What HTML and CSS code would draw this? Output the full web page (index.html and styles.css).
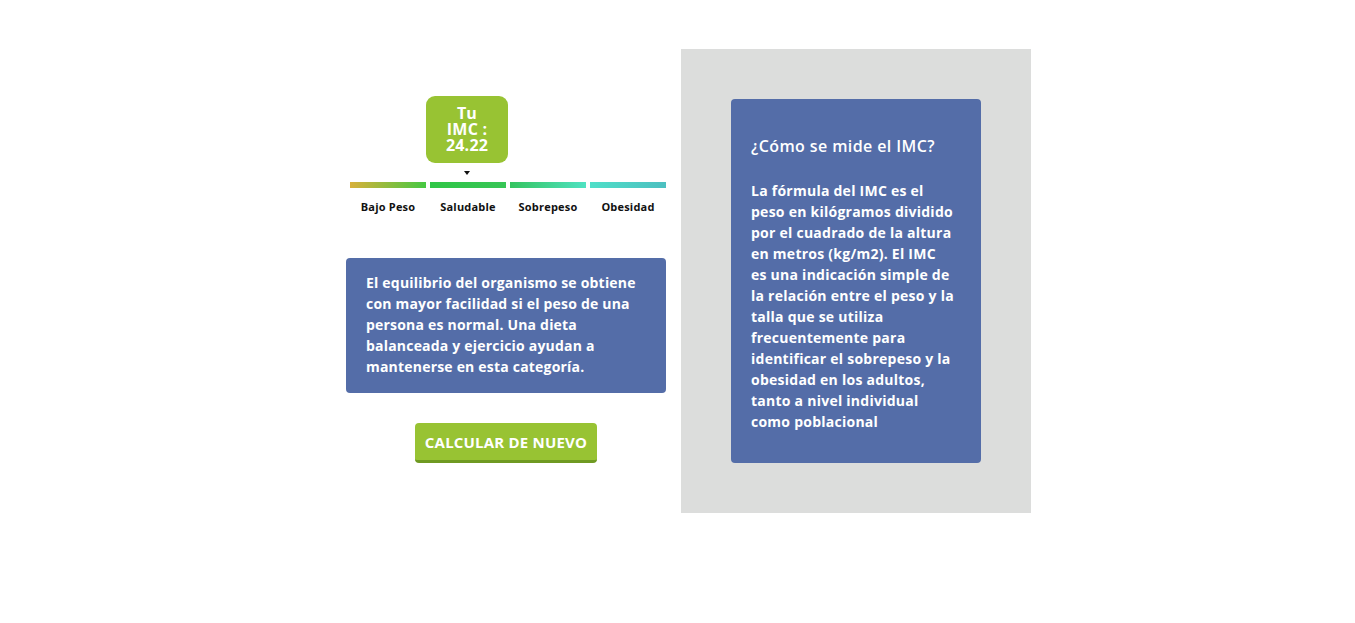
FILE: index.html
```html
<!DOCTYPE html>
<html lang="es">
<head>
<meta charset="utf-8">
<title>IMC</title>
<link rel="stylesheet" href="styles.css">
</head>
<body>
<main class="wrapper">
  <section class="result">
    <div class="bubble-wrap" style="margin-left: 80px;">
      <div class="bubble">Tu<br>IMC :<br>24.22</div>
      <div class="pointer"></div>
    </div>
    <div class="scale">
      <div class="seg">
        <div class="bar bar-bajo"></div>
        <span class="label">Bajo Peso</span>
      </div>
      <div class="seg">
        <div class="bar bar-salud"></div>
        <span class="label">Saludable</span>
      </div>
      <div class="seg">
        <div class="bar bar-sobre"></div>
        <span class="label">Sobrepeso</span>
      </div>
      <div class="seg">
        <div class="bar bar-obes"></div>
        <span class="label">Obesidad</span>
      </div>
    </div>
    <div class="message">El equilibrio del organismo se obtiene<br>con mayor facilidad si el peso de una<br>persona es normal. Una dieta<br>balanceada y ejercicio ayudan a<br>mantenerse en esta categoría.</div>
    <button class="again">CALCULAR DE NUEVO</button>
  </section>
  <aside class="info">
    <div class="info-card">
      <h2 class="info-title">¿Cómo se mide el IMC?</h2>
      <p class="info-text">La fórmula del IMC es el<br>peso en kilógramos dividido<br>por el cuadrado de la altura<br>en metros (kg/m2). El IMC<br>es una indicación simple de<br>la relación entre el peso y la<br>talla que se utiliza<br>frecuentemente para<br>identificar el sobrepeso y la<br>obesidad en los adultos,<br>tanto a nivel individual<br>como poblacional</p>
    </div>
  </aside>
</main>
</body>
</html>
```
FILE: styles.css
```css
* { box-sizing: border-box; }
html, body { margin: 0; padding: 0; background: #ffffff; }
body {
  font-family: "Open Sans", "DejaVu Sans", sans-serif;
  color: #111;
}
.wrapper {
  display: flex;
  width: 700px;
  margin: 49px 0 0 331px;
}
.result {
  width: 350px;
  padding: 47px 15px 0;
  display: flex;
  flex-direction: column;
}
.bubble-wrap {
  display: flex;
  flex-direction: column;
  align-items: center;
  align-self: flex-start;
}
.bubble {
  width: 82px;
  height: 67px;
  background: #98c333;
  border-radius: 9px;
  color: #fff;
  font-weight: 700;
  font-size: 16px;
  line-height: 16px;
  letter-spacing: 0.2px;
  text-align: center;
  padding-top: 9px;
}
.pointer {
  margin-top: 8px;
  width: 0;
  height: 0;
  border-left: 3px solid transparent;
  border-right: 3px solid transparent;
  border-top: 4px solid #111;
}
.scale {
  display: flex;
  width: 320px;
  margin-top: 7px;
}
.seg {
  width: 80px;
  padding-left: 4px;
  display: flex;
  flex-direction: column;
  align-items: center;
}
.bar {
  width: 76px;
  height: 6px;
}
.bar-bajo { background: linear-gradient(90deg, #d8b03a, #45c842); }
.bar-salud { background: linear-gradient(90deg, #2fc646, #37c556); }
.bar-sobre { background: linear-gradient(90deg, #34c45f, #4fe2c2); }
.bar-obes { background: linear-gradient(90deg, #4fdfc8, #4cbfc0); }
.label {
  margin-top: 11px;
  font-size: 11px;
  font-weight: 700;
  letter-spacing: 0.2px;
  color: #111;
  white-space: nowrap;
}
.message {
  margin-top: 44px;
  width: 320px;
  background: #546da8;
  border-radius: 4px;
  color: #fff;
  font-size: 14px;
  font-weight: 700;
  line-height: 21px;
  letter-spacing: 0.2px;
  padding: 14px 20px 16px;
  white-space: nowrap;
}
.again {
  align-self: center;
  margin-top: 30px;
  width: 182px;
  height: 40px;
  border: 0;
  border-bottom: 3px solid #6f9a22;
  border-radius: 4px;
  background: #98c333;
  color: #fff;
  font-family: inherit;
  font-size: 15px;
  font-weight: 700;
  letter-spacing: 0.2px;
  padding: 0;
  cursor: pointer;
}
.info {
  width: 350px;
  height: 464px;
  background: #dcdddc;
  padding: 50px;
}
.info-card {
  height: 364px;
  background: #546da8;
  border-radius: 4px;
  padding: 35px 20px 0;
  color: #fff;
}
.info-title {
  margin: 0;
  font-size: 16px;
  font-weight: 600;
  line-height: 24px;
  letter-spacing: 0.4px;
}
.info-text {
  margin: 22px 0 0;
  font-size: 14px;
  font-weight: 700;
  line-height: 21px;
  letter-spacing: 0.25px;
  white-space: nowrap;
}
```
